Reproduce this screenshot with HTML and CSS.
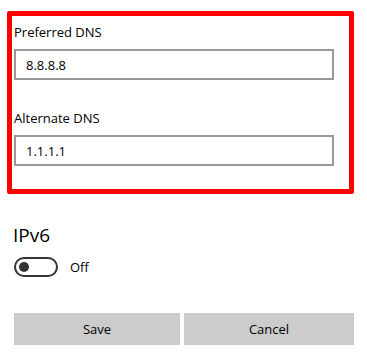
FILE: index.html
```html
<!DOCTYPE html>
<html lang="en">
  <head>
    <meta charset="UTF-8" />
    <meta name="viewport" content="width=device-width, initial-scale=1.0" />
    <title>DNS Settings</title>
    <link rel="stylesheet" href="styles.css">
  </head>
  <body>
    <div class="dns-box">
      <div class="form-group">
        <label for="preferredDns">Preferred DNS</label>
        <input type="text" id="preferredDns" value="8.8.8.8" />
      </div>
      <div class="form-group">
        <label for="alternateDns">Alternate DNS</label>
        <input type="text" id="alternateDns" value="1.1.1.1" />
      </div>
    </div>

    <h3 class="section-title">IPv6</h3>
    <div class="toggle-row">
      <span class="toggle"><span class="knob"></span></span>
      <span class="toggle-label">Off</span>
    </div>

    <div class="actions">
      <button type="button" class="btn">Save</button>
      <button type="button" class="btn">Cancel</button>
    </div>
  </body>
</html>
```

FILE: styles.css
```css
body {
  font-family: "Open Sans", "Noto Sans", sans-serif;
  margin: 0;
  background-color: #fff;
  color: #000;
  width: 367px;
}
.dns-box {
  margin: 11px 0 0 7px;
  width: 347px;
  box-sizing: border-box;
  border: 5px solid #ff0000;
  border-radius: 2px;
  padding: 6px 15px 23px 2px;
}
.form-group + .form-group {
  margin-top: 28px;
}
label {
  display: block;
  font-size: 13px;
  line-height: 20px;
  margin-bottom: 7px;
}
input {
  display: block;
  width: 320px;
  height: 31px;
  box-sizing: border-box;
  border: 2px solid #999;
  padding: 0 10px;
  font-family: inherit;
  font-size: 13px;
  color: #000;
  outline: none;
}
.section-title {
  margin: 27px 0 0 13px;
  font-size: 19px;
  font-weight: normal;
  line-height: 28px;
}
.toggle-row {
  display: flex;
  align-items: center;
  margin: 8px 0 0 14px;
}
.toggle {
  display: flex;
  align-items: center;
  width: 44px;
  height: 20px;
  box-sizing: border-box;
  border: 2px solid #333;
  border-radius: 10px;
  padding-left: 3px;
}
.knob {
  width: 10px;
  height: 10px;
  border-radius: 50%;
  background: #333;
}
.toggle-label {
  margin-left: 12px;
  font-size: 13px;
}
.actions {
  display: flex;
  gap: 4px;
  margin: 36px 0 0 14px;
}
.btn {
  width: 166px;
  height: 32px;
  border: none;
  background-color: #ccc;
  font-family: inherit;
  font-size: 13px;
  color: #000;
  padding: 0;
}
.btn + .btn {
  width: 170px;
}
```
